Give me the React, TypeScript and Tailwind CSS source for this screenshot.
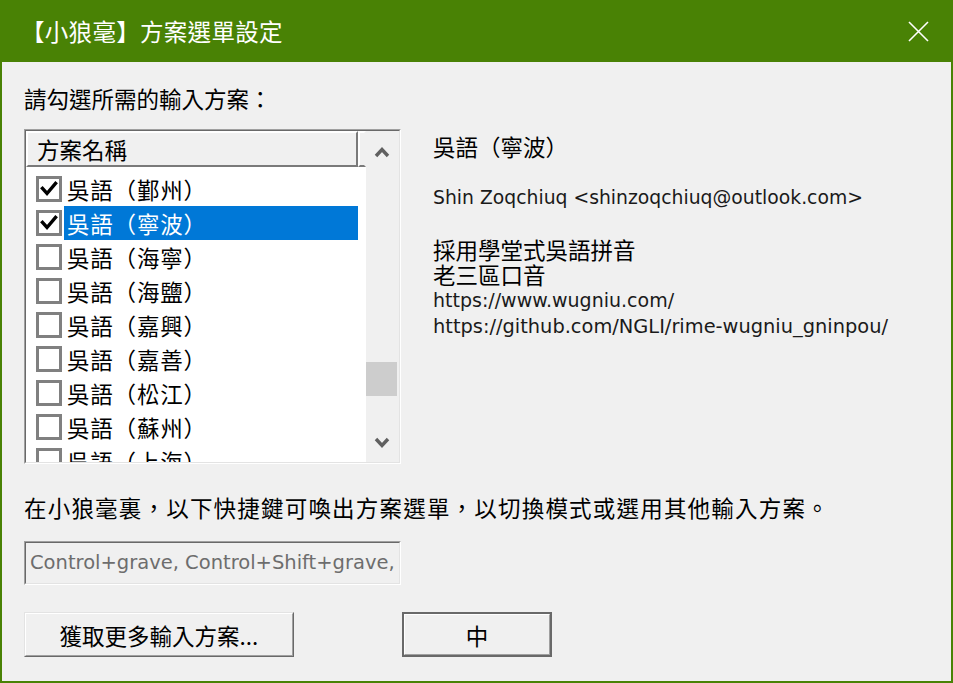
import React from "react";

const items = ["鄞州", "寧波", "海寧", "海鹽", "嘉興", "嘉善", "松江", "蘇州", "上海"];

function Check() {
  return (
    <svg width="20" height="20" viewBox="0 0 20 20">
      <path d="M3.5 9.5 L8 14.5 L16.5 4.5" fill="none" stroke="#000" strokeWidth="3.4" strokeLinecap="square" />
    </svg>
  );
}

function Chevron({ up }: { up: boolean }) {
  return (
    <svg width="16" height="12" viewBox="0 0 16 12">
      {up ? (
        <path d="M2 10 L8 3.5 L14 10" fill="none" stroke="#606060" strokeWidth="3.4" />
      ) : (
        <path d="M2 2 L8 8.5 L14 2" fill="none" stroke="#606060" strokeWidth="3.4" />
      )}
    </svg>
  );
}

export default function App() {
  const cjk = "font-['Noto_Sans_CJK_TC','Noto_Sans_CJK_JP',sans-serif]";
  const latin = "font-['DejaVu_Sans','Noto_Sans_CJK_TC',sans-serif]";
  return (
    <div className={`w-[953px] h-[683px] flex flex-col bg-[#f0f0f0] border-x-2 border-b-2 border-[#498205] overflow-hidden ${cjk}`}>
      {/* Title bar */}
      <div className="h-[62px] shrink-0 bg-[#498205] flex items-center justify-between -mx-[2px] pl-[21px] pr-[24px]">
        <div className="text-white text-[23.5px] tracking-[0.3px] leading-[30px] pb-[1px]">【小狼毫】方案選單設定</div>
        <svg width="21" height="21" viewBox="0 0 21 21">
          <path d="M1 1 L20 20 M20 1 L1 20" stroke="#fff" strokeWidth="1.6" />
        </svg>
      </div>

      <div className="flex flex-col pl-[22px] pt-[21px]">
        <div className="text-[22.5px] leading-[30px] text-black">請勾選所需的輸入方案：</div>

        <div className="flex mt-[16px]">
          {/* List box */}
          <div className="w-[377px] h-[335px] border border-t-[#a0a0a0] border-l-[#a0a0a0] border-b-white border-r-white">
            <div className="w-full h-full border border-t-[#696969] border-l-[#696969] border-b-[#e3e3e3] border-r-[#e3e3e3] flex">
              <div className="w-[340px] h-full flex flex-col bg-white overflow-hidden">
                <div className="h-[36px] shrink-0 flex bg-[#f0f0f0]">
                  <div className="w-[332px] h-full border-2 border-t-white border-l-white border-b-[#7a7a7a] border-r-[#7a7a7a] pl-[9px] text-[22.5px] leading-[32px] text-black">
                    方案名稱
                  </div>
                  <div className="flex-1 h-full border-2 border-t-white border-l-white border-r-transparent border-b-[#7a7a7a]"></div>
                </div>
                <div className="flex flex-col pt-[5px]">
                  {items.map((name, i) => {
                    const checked = i < 2;
                    const selected = i === 1;
                    return (
                      <div key={name} className="h-[34px] shrink-0 flex items-center pl-[10px]">
                        <div className="w-[26px] h-[26px] border-[3px] border-[#808080] bg-white flex items-center justify-center">
                          {checked && <Check />}
                        </div>
                        <div
                          className={`ml-[2px] w-[294px] h-[34px] pl-[3px] text-[22.5px] tracking-[0.8px] leading-[34px] whitespace-nowrap ${
                            selected ? "bg-[#0078d7] text-white" : "text-black"
                          }`}
                        >
                          吳語（{name}）
                        </div>
                      </div>
                    );
                  })}
                </div>
              </div>
              {/* Scrollbar */}
              <div className="w-[31px] h-full bg-[#f0f0f0] flex flex-col">
                <div className="h-[42px] flex items-center justify-center">
                  <Chevron up />
                </div>
                <div className="flex-1">
                  <div className="mt-[189px] h-[34px] w-full bg-[#cdcdcd]"></div>
                </div>
                <div className="h-[38px] flex items-center justify-center">
                  <Chevron up={false} />
                </div>
              </div>
            </div>
          </div>

          {/* Right panel */}
          <div className="ml-[32px] mt-[4px] flex flex-col text-black">
            <div className="text-[22.5px] leading-[26px]">吳語（寧波）</div>
            <div className="h-[26px]"></div>
            <div className={`${latin} text-[18.8px] leading-[26px] text-[#1a1a1a] whitespace-nowrap`}>
              Shin Zoqchiuq &lt;shinzoqchiuq@outlook.com&gt;
            </div>
            <div className="h-[26px]"></div>
            <div className="text-[22.5px] leading-[25px]">採用學堂式吳語拼音</div>
            <div className="text-[22.5px] leading-[25px]">老三區口音</div>
            <div className={`${latin} text-[19px] leading-[27px] text-[#1a1a1a] whitespace-nowrap`}>
              https://www.wugniu.com/
            </div>
            <div className={`${latin} text-[19.4px] leading-[26px] text-[#1a1a1a] whitespace-nowrap`}>
              https://github.com/NGLI/rime-wugniu_gninpou/
            </div>
          </div>
        </div>

        <div className="mt-[28px] text-[22.5px] tracking-[1.2px] leading-[30px] text-black whitespace-nowrap">
          在小狼毫裏，以下快捷鍵可喚出方案選單，以切換模式或選用其他輸入方案。
        </div>

        <div className="mt-[19px] w-[377px] h-[44px] border border-t-[#a0a0a0] border-l-[#a0a0a0] border-b-white border-r-white">
          <div className="w-full h-full border border-t-[#696969] border-l-[#696969] border-b-[#e3e3e3] border-r-[#e3e3e3] bg-[#f0f0f0] overflow-hidden flex items-center pl-[4px]">
            <span className={`${latin} text-[19.5px] leading-[26px] text-[#6d6d6d] whitespace-nowrap`}>
              Control+grave, Control+Shift+grave,
            </span>
          </div>
        </div>

        <div className="mt-[27px] flex items-start">
          <div className="w-[270px] h-[45px] border border-t-[#e3e3e3] border-l-[#e3e3e3] border-b-[#696969] border-r-[#696969]">
            <div className="w-full h-full border border-t-white border-l-white border-b-[#a0a0a0] border-r-[#a0a0a0] bg-[#f0f0f0] flex items-center justify-center text-[22.5px] leading-[30px] text-black">
              獲取更多輸入方案...
            </div>
          </div>
          <div className="ml-[108px] w-[150px] h-[45px] border-2 border-[#696969]">
            <div className="w-full h-full border border-t-white border-l-white border-b-[#a0a0a0] border-r-[#a0a0a0] bg-[#f0f0f0] flex items-center justify-center text-[22.5px] leading-[30px] text-black">
              中
            </div>
          </div>
        </div>
      </div>
    </div>
  );
}
